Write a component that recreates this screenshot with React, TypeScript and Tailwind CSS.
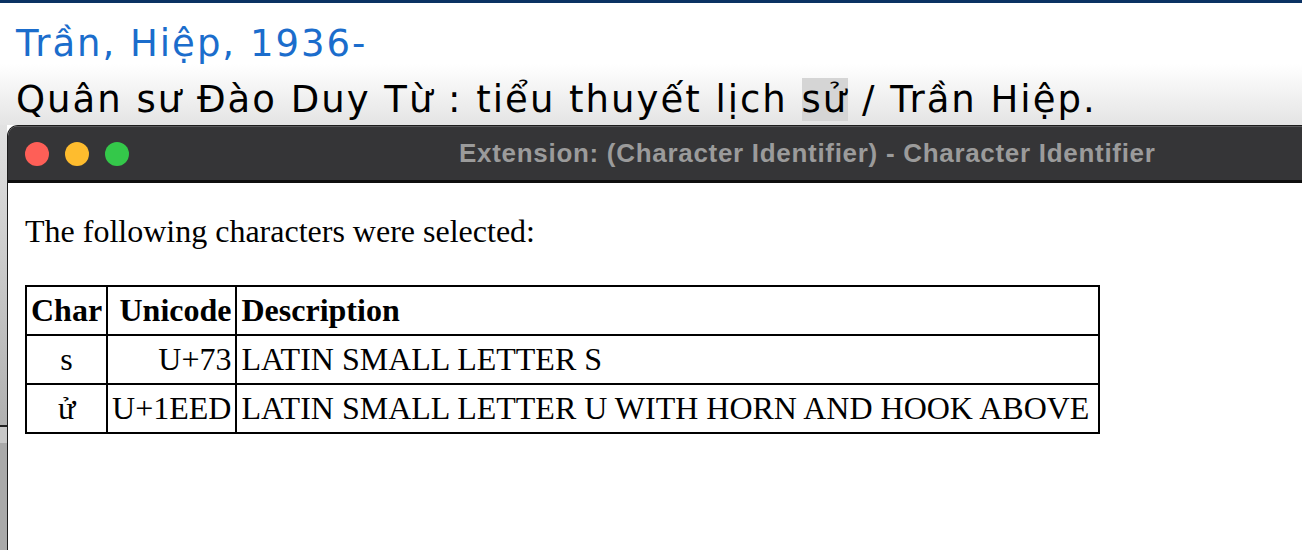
const rows = [
  { ch: 's', code: 'U+73', desc: 'LATIN SMALL LETTER S' },
  { ch: 'ử', code: 'U+1EED', desc: 'LATIN SMALL LETTER U WITH HORN AND HOOK ABOVE' },
];

const App = () => {
  return (
    <div className="w-[1302px] h-[550px] overflow-hidden flex flex-col bg-white">
      <div className="h-[3px] bg-[#0b3263] shrink-0" />
      <div className="h-[122px] shrink-0 bg-gradient-to-b from-white via-white to-[#e4e4e4] px-[16px] pt-[13px] font-['DejaVu_Sans',sans-serif] text-[37px] tracking-[2px] leading-[56px]">
        <div className="text-[#1b6dcc]">Trần, Hiệp, 1936-</div>
        <div className="text-black whitespace-nowrap">
          Quân sư Đào Duy Từ : tiểu thuyết lịch <span className="bg-[#d5d5d5]">sử</span> / Trần Hiệp.
        </div>
      </div>
      <div className="flex flex-1 min-h-0">
        <div className="w-[7px] shrink-0 flex flex-col">
          <div className="h-[300px] bg-gradient-to-b from-[#e2e2e2] to-[#b0b0b0]" />
          <div className="h-[2px] bg-[#222]" />
          <div className="h-[16px] bg-[#c8c8c8]" />
          <div className="flex-1 bg-[#a9a9a9]" />
        </div>
        <div className="flex-1 flex flex-col border-l border-t border-[#1c1c1c] rounded-tl-[11px] overflow-hidden bg-white">
          <div className="h-[57px] shrink-0 bg-[#353537] border-t border-[#5a5a5c] border-b-[3px] border-b-[#0e0e0e] flex items-center relative">
            <div className="flex items-center gap-[16px] pl-[17px]">
              <span className="w-[24px] h-[24px] rounded-full bg-[#fe5f57]" />
              <span className="w-[24px] h-[24px] rounded-full bg-[#febc2e]" />
              <span className="w-[24px] h-[24px] rounded-full bg-[#34c84a]" />
            </div>
            <div className="absolute left-[451px] top-[7px] whitespace-nowrap font-['Liberation_Sans',sans-serif] font-bold text-[26px] tracking-[0.7px] text-[#9b9b9b]">
              Extension: (Character Identifier) - Character Identifier
            </div>
          </div>
          <div className="flex-1 px-[17px] pt-[28px] font-['Liberation_Serif',serif] text-[32px] text-black">
            <p className="leading-[40px]">The following characters were selected:</p>
            <table className="w-[1075px] mt-[34px] border-collapse border-2 border-black leading-[37px]">
              <thead>
                <tr>
                  <th className="border-2 border-black px-[4px] py-[5px] text-center font-bold">Char</th>
                  <th className="border-2 border-black px-[4px] py-[5px] text-right font-bold">Unicode</th>
                  <th className="border-2 border-black px-[4px] py-[5px] text-left font-bold w-[864px]">Description</th>
                </tr>
              </thead>
              <tbody>
                {rows.map((r) => (
                  <tr key={r.code}>
                    <td className="border-2 border-black px-[4px] py-[5px] text-center">{r.ch}</td>
                    <td className="border-2 border-black px-[4px] py-[5px] text-right">{r.code}</td>
                    <td className="border-2 border-black px-[4px] py-[5px] text-left">{r.desc}</td>
                  </tr>
                ))}
              </tbody>
            </table>
          </div>
        </div>
      </div>
    </div>
  );
};

export default App;
